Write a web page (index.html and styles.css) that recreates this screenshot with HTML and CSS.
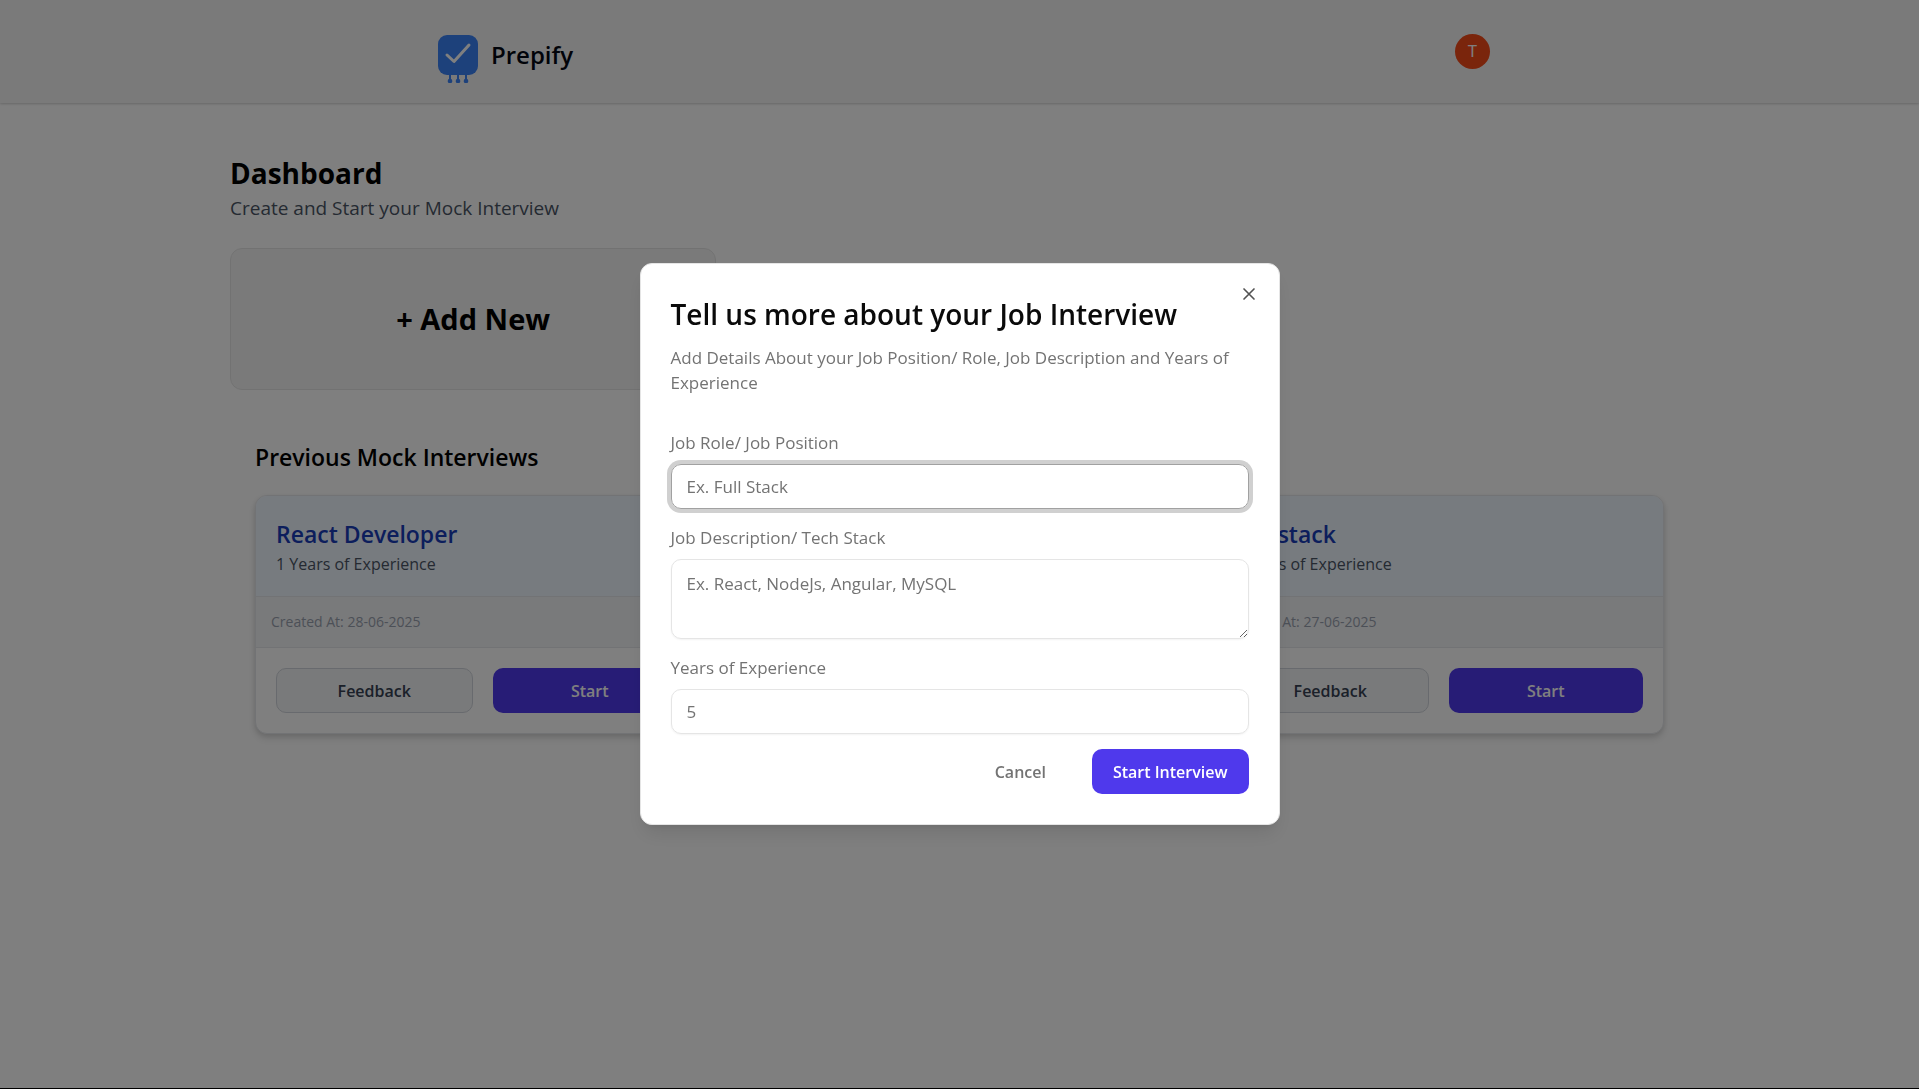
FILE: index.html
```html
<!DOCTYPE html>
<html lang="en">
<head>
<meta charset="utf-8">
<meta name="viewport" content="width=device-width, initial-scale=1">
<title>Prepify</title>
<link rel="stylesheet" href="styles.css">
</head>
<body>
<header class="header">
  <a class="brand" href="#">
    <svg class="brand-mark" width="40" height="48" viewBox="0 0 40 48" aria-hidden="true">
      <rect width="40" height="40" rx="9" fill="#3b82f6"/>
      <path d="M9 20 L16 26.500 L31 10" fill="none" stroke="#fff" stroke-width="3" stroke-linecap="round" stroke-linejoin="round"/>
      <path d="M12 40v6M20 40v6M28 40v6" stroke="#3b82f6" stroke-width="2"/>
      <g fill="#3b82f6"><circle cx="12" cy="46" r="2.300"/><circle cx="20" cy="46" r="2.300"/><circle cx="28" cy="46" r="2.300"/></g>
    </svg>
    <span class="brand-name">Prepify</span>
  </a>
  <button class="avatar" type="button" aria-label="Open user menu">T</button>
</header>

<main class="page">
  <h1 class="page-title">Dashboard</h1>
  <p class="page-lead">Create and Start your Mock Interview</p>
  <div class="add-grid">
    <button class="add-card" type="button">+ Add New</button>
  </div>

  <section class="previous">
    <h2 class="section-title">Previous Mock Interviews</h2>
    <div class="card-grid">
      <article class="card">
        <div class="card-head">
          <h3 class="card-title">React Developer</h3>
          <p class="card-years">1 Years of Experience</p>
        </div>
        <p class="card-date">Created At: 28-06-2025</p>
        <div class="card-actions">
          <button class="btn btn-light" type="button">Feedback</button>
          <button class="btn btn-primary" type="button">Start</button>
        </div>
      </article>
      <article class="card card-last">
        <div class="card-head">
          <h3 class="card-title">Full stack</h3>
          <p class="card-years">1 Years of Experience</p>
        </div>
        <p class="card-date">Created At: 27-06-2025</p>
        <div class="card-actions">
          <button class="btn btn-light" type="button">Feedback</button>
          <button class="btn btn-primary" type="button">Start</button>
        </div>
      </article>
    </div>
  </section>
</main>

<div class="overlay">
  <div class="dialog" role="dialog" aria-modal="true" aria-labelledby="dialog-title">
    <button class="close" type="button" aria-label="Close">
      <svg width="20" height="20" viewBox="0 0 24 24" fill="none" stroke="currentColor" stroke-width="2" stroke-linecap="round" aria-hidden="true"><path d="M18 6 6 18M6 6l12 12"/></svg>
    </button>
    <h2 class="dialog-title" id="dialog-title">Tell us more about your Job Interview</h2>
    <p class="dialog-text">Add Details About your Job Position/ Role, Job Description and Years of Experience</p>
    <form class="form">
      <div class="fields">
        <div class="field">
          <label for="role">Job Role/ Job Position</label>
          <input class="control is-active" id="role" type="text" placeholder="Ex. Full Stack">
        </div>
        <div class="field">
          <label for="stack">Job Description/ Tech Stack</label>
          <textarea class="control control-area" id="stack" placeholder="Ex. React, NodeJs, Angular, MySQL"></textarea>
        </div>
        <div class="field">
          <label for="years">Years of Experience</label>
          <input class="control" id="years" type="number" placeholder="5">
        </div>
      </div>
      <div class="form-actions">
        <button class="btn btn-ghost" type="button">Cancel</button>
        <button class="btn btn-primary" type="submit">Start Interview</button>
      </div>
    </form>
  </div>
</div>
</body>
</html>
```
FILE: styles.css
```css
*, *::before, *::after { box-sizing: border-box; }

body {
  margin: 0;
  min-height: 100vh;
  background: #fff;
  color: #0a0a0a;
  font-family: "Open Sans", "Noto Sans", sans-serif;
  font-size: 16px;
  line-height: 25px;
}

h1, h2, h3, p { margin: 0; }

button, input, textarea { font: inherit; color: inherit; }

button { cursor: pointer; }

/* Header */
.header {
  display: flex;
  justify-content: space-around;
  align-items: center;
  padding: 0 20px;
  background: #f5f5f5;
  box-shadow: 0 1px 3px rgba(0, 0, 0, 0.1), 0 1px 2px rgba(0, 0, 0, 0.1);
}

.brand {
  display: flex;
  gap: 13px;
  padding: 35px 64px 20px 9px;
  color: #030712;
  text-decoration: none;
}

.brand-name {
  font-size: 24px;
  font-weight: 600;
  line-height: 40px;
}

.avatar {
  width: 35px;
  height: 35px;
  padding: 0;
  border: 0;
  border-radius: 50%;
  background: #f54a19;
  color: #fff;
  font-family: Inter, sans-serif;
  font-size: 16px;
}

/* Dashboard */
.page {
  margin: 0 180px;
  padding: 50px;
}

.page-title {
  font-size: 28px;
  font-weight: 700;
  line-height: 40px;
  color: #000;
}

.page-lead {
  font-size: 19px;
  line-height: 30px;
  color: #4a5565;
}

.add-grid {
  display: grid;
  grid-template-columns: repeat(3, 1fr);
  margin: 25px 0;
}

.add-card {
  padding: 50px;
  border: 1px solid #e5e5e5;
  border-radius: 12px;
  background: #f5f5f5;
  color: #000;
  font-size: 29px;
  font-weight: 700;
  line-height: 40px;
}

.previous { padding: 25px; }

.section-title {
  margin-bottom: 20px;
  font-size: 23px;
  font-weight: 600;
  line-height: 35px;
  color: #000;
}

.card-grid {
  display: grid;
  grid-template-columns: repeat(3, 1fr);
  gap: 25px;
}

.card {
  overflow: hidden;
  border: 1px solid #e5e7eb;
  border-radius: 12px;
  background: #fff;
  box-shadow: 0 5px 8px rgba(0, 0, 0, 0.1), 0 2px 5px rgba(0, 0, 0, 0.1);
}

.card-last { grid-column: 3; }

.card-head {
  padding: 21px 20px 19px;
  background: #eff6ff;
  border-bottom: 1px solid #e5e7eb;
}

.card-title {
  font-size: 23px;
  font-weight: 600;
  line-height: 35px;
  color: #193cb8;
}

.card-years { color: #4a5565; }

.card-date {
  padding: 15px;
  background: #f3f4f6;
  border-bottom: 1px solid #e5e7eb;
  font-size: 14px;
  line-height: 20px;
  color: #99a1af;
}

.card-actions {
  display: flex;
  gap: 20px;
  padding: 20px;
}

.card-actions .btn { flex: 1; }

/* Buttons */
.btn {
  height: 45px;
  padding: 2px 21px 0;
  border: 0;
  border-radius: 10px;
  background: transparent;
  font-weight: 600;
}

.btn-light {
  border: 1px solid #d1d5dc;
  background: #f3f4f6;
  color: #364153;
}

.btn-primary {
  background: #4f39ec;
  color: #fff;
}

.btn-ghost { color: #737373; }

/* Dialog */
.overlay {
  position: fixed;
  inset: 0;
  display: flex;
  align-items: center;
  justify-content: center;
  border-bottom: 1px solid #000;
  background: rgba(0, 0, 0, 0.5);
}

.dialog {
  position: relative;
  width: 640px;
  max-width: 100%;
  padding: 30px;
  border: 1px solid #e5e5e5;
  border-radius: 12px;
  background: #fff;
  box-shadow: 0 12px 19px -4px rgba(0, 0, 0, 0.1), 0 5px 8px -5px rgba(0, 0, 0, 0.1);
}

.close {
  position: absolute;
  top: 20px;
  right: 20px;
  display: flex;
  padding: 0;
  border: 0;
  background: transparent;
  opacity: 0.7;
}

.dialog-title {
  margin-bottom: 10px;
  font-size: 28px;
  font-weight: 600;
  line-height: 41px;
}

.dialog-text {
  margin-bottom: 35px;
  font-size: 17px;
  color: #737373;
}

.form {
  display: flex;
  flex-direction: column;
  gap: 15px;
}

.fields {
  display: flex;
  flex-direction: column;
  gap: 16px;
  font-size: 17px;
  color: #737373;
}

.field {
  display: flex;
  flex-direction: column;
  gap: 9px;
}

.control {
  width: 100%;
  height: 45px;
  padding: 0 15px;
  border: 1px solid #e5e5e5;
  border-radius: 10px;
  background: transparent;
  color: #0a0a0a;
  outline: none;
  box-shadow: 0 1px 2px rgba(0, 0, 0, 0.05);
}

.control::placeholder {
  color: #737373;
  opacity: 1;
}

.control-area {
  height: 80px;
  padding: 11px 15px;
  resize: vertical;
}

.control.is-active,
.control:focus {
  border-color: #a1a1a1;
  box-shadow: 0 0 0 4px #d0d0d0;
}

.form-actions {
  display: flex;
  justify-content: flex-end;
  gap: 25px;
}
```
